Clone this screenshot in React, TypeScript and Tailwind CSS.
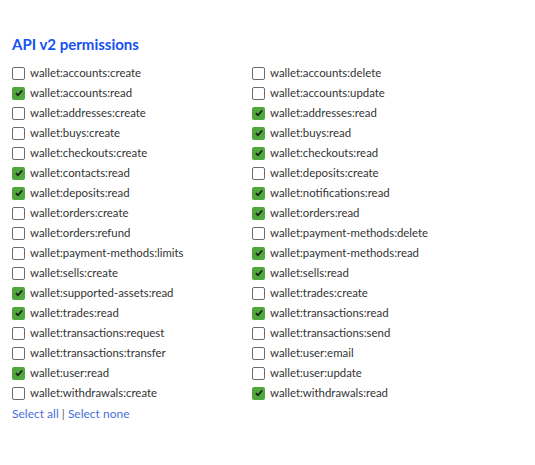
const LEFT: [string, boolean][] = [
  ['wallet:accounts:create', false],
  ['wallet:accounts:read', true],
  ['wallet:addresses:create', false],
  ['wallet:buys:create', false],
  ['wallet:checkouts:create', false],
  ['wallet:contacts:read', true],
  ['wallet:deposits:read', true],
  ['wallet:orders:create', false],
  ['wallet:orders:refund', false],
  ['wallet:payment-methods:limits', false],
  ['wallet:sells:create', false],
  ['wallet:supported-assets:read', true],
  ['wallet:trades:read', true],
  ['wallet:transactions:request', false],
  ['wallet:transactions:transfer', false],
  ['wallet:user:read', true],
  ['wallet:withdrawals:create', false],
];

const RIGHT: [string, boolean][] = [
  ['wallet:accounts:delete', false],
  ['wallet:accounts:update', false],
  ['wallet:addresses:read', true],
  ['wallet:buys:read', true],
  ['wallet:checkouts:read', true],
  ['wallet:deposits:create', false],
  ['wallet:notifications:read', true],
  ['wallet:orders:read', true],
  ['wallet:payment-methods:delete', false],
  ['wallet:payment-methods:read', true],
  ['wallet:sells:read', true],
  ['wallet:trades:create', false],
  ['wallet:transactions:read', true],
  ['wallet:transactions:send', false],
  ['wallet:user:email', false],
  ['wallet:user:update', false],
  ['wallet:withdrawals:read', true],
];

function Box({ checked }: { checked: boolean }) {
  if (checked) {
    return (
      <span className="flex h-[13px] w-[13px] shrink-0 items-center justify-center rounded-[2px] bg-[#4fa83d]">
        <svg viewBox="0 0 12 12" className="h-[10px] w-[10px]">
          <path d="M2.3 6.2 L4.8 8.7 L9.8 3" fill="none" stroke="#1a1a1a" strokeWidth="1.9" />
        </svg>
      </span>
    );
  }
  return <span className="h-[13px] w-[13px] shrink-0 rounded-[2px] border border-[#6b6b6b] bg-white" />;
}

function Column({ items }: { items: [string, boolean][] }) {
  return (
    <div className="flex flex-col">
      {items.map(([name, on]) => (
        <label key={name} className="flex h-5 items-center gap-[5px]">
          <Box checked={on} />
          <span className="text-[11.4px] text-[#333]">{name}</span>
        </label>
      ))}
    </div>
  );
}

export default function App() {
  return (
    <div className="h-[465px] overflow-hidden bg-white px-3 pt-[35px]" style={{ fontFamily: 'Lato, "Open Sans", sans-serif' }}>
      <h2 className="text-[15px] font-bold leading-[18px] text-[#1652f0]">API v2 permissions</h2>
      <div className="mt-[10px] grid grid-cols-[240px_240px]">
        <Column items={LEFT} />
        <Column items={RIGHT} />
      </div>
      <div className="mt-[3px] text-[12px] leading-4 text-[#4a6fdc]">
        <span>Select all</span>
        <span className="text-[#666]"> | </span>
        <span>Select none</span>
      </div>
      <h2 className="mt-[40px] pl-[44px] text-[15px] font-bold leading-[18px] text-[#333]">Notifications</h2>
    </div>
  );
}
